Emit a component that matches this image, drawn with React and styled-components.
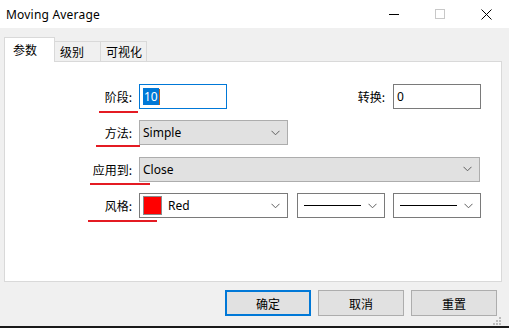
import React from "react";
import styled, { createGlobalStyle } from "styled-components";

const Global = createGlobalStyle`
  html, body { margin: 0; padding: 0; background: #f0f0f0; }
  body { font-family: "Noto Sans", "Noto Sans CJK SC", sans-serif; }
  * { box-sizing: border-box; }
`;

const UI = `"Noto Sans", "Noto Sans CJK SC", sans-serif`;
const CJK = `"Noto Sans CJK SC", "Noto Sans", sans-serif`;

const Window = styled.div`
  width: 509px;
  height: 328px;
  background: #f0f0f0;
  display: flex;
  flex-direction: column;
  overflow: hidden;
`;

const TitleBar = styled.div`
  height: 28px;
  background: #ffffff;
  display: flex;
  align-items: center;
  padding-left: 6px;
  flex-shrink: 0;
`;

const Title = styled.div`
  font-family: ${UI};
  font-size: 12px;
  color: #000;
  flex: 1;
  letter-spacing: 0.2px;
`;

const Controls = styled.div`
  display: flex;
  height: 100%;
`;

const CtrlBtn = styled.div`
  width: 46px;
  height: 28px;
  display: flex;
  align-items: center;
  justify-content: center;
`;

const Body = styled.div`
  flex: 1;
  display: flex;
  flex-direction: column;
  padding: 9px 7px 0 4px;
`;

const TabStrip = styled.div`
  display: flex;
  align-items: flex-end;
  height: 25px;
  margin-bottom: -1px;
  position: relative;
  z-index: 1;
`;

const Tab = styled.div`
  font-family: ${CJK};
  font-size: 12px;
  color: #000;
  width: ${(p) => p.$w}px;
  height: ${(p) => (p.$active ? 25 : 21)}px;
  background: ${(p) => (p.$active ? "#ffffff" : "#f0f0f0")};
  border: 1px solid #d9d9d9;
  border-bottom: ${(p) => (p.$active ? "none" : "1px solid #d9d9d9")};
  border-left: ${(p) => (p.$first || p.$active ? "1px solid #d9d9d9" : "none")};
  display: flex;
  align-items: center;
  padding-left: ${(p) => (p.$active ? 8 : 5)}px;
  padding-bottom: ${(p) => (p.$active ? 1 : 0)}px;
`;

const Panel = styled.div`
  height: 221px;
  width: 498px;
  background: #ffffff;
  border: 1px solid #d9d9d9;
  display: flex;
  flex-direction: column;
  gap: 11.4px;
  padding-top: 22px;
`;

const Row = styled.div`
  display: flex;
  align-items: center;
  height: 25px;
  position: relative;
`;

const Label = styled.div`
  font-family: ${CJK};
  font-size: 12px;
  color: #000;
  width: ${(p) => p.$w || 127}px;
  text-align: right;
  margin-right: ${(p) => p.$mr || 7}px;
  flex-shrink: 0;
`;

const Underline = styled.div`
  position: absolute;
  left: ${(p) => p.$left}px;
  width: ${(p) => p.$width}px;
  top: ${(p) => p.$top}px;
  height: 2px;
  background: #e41b23;
`;

const TextBox = styled.div`
  width: 88px;
  height: 25px;
  border: 1px solid ${(p) => (p.$focus ? "#0078d7" : "#7a7a7a")};
  background: #fff;
  display: flex;
  align-items: center;
  padding-left: 3px;
  font-family: ${UI};
  font-size: 12px;
  color: #000;
  flex-shrink: 0;
`;

const Selected = styled.span`
  background: #0078d7;
  color: #fff;
  padding: 0 1px;
  line-height: 17px;
`;

const Caret = styled.span`
  display: inline-block;
  width: 1px;
  height: 16px;
  background: #c0601a;
`;

const Select = styled.div`
  width: ${(p) => p.$w}px;
  height: 25px;
  margin-left: ${(p) => p.$ml || 0}px;
  border: 1px solid ${(p) => (p.$gray ? "#adadad" : "#7a7a7a")};
  background: ${(p) => (p.$gray ? "#e1e1e1" : "#ffffff")};
  display: flex;
  align-items: center;
  padding-left: 3px;
  padding-right: 7px;
  font-family: ${UI};
  font-size: 12px;
  color: #000;
  flex-shrink: 0;
`;

const SelectValue = styled.div`
  flex: 1;
  display: flex;
  align-items: center;
  gap: 6px;
`;

const Swatch = styled.div`
  width: 19px;
  height: 19px;
  background: #ff0000;
  border: 1px solid #8a8a8a;
`;

const LineSample = styled.div`
  width: 57px;
  height: 1px;
  background: #000;
  margin-left: 3px;
`;

const Spacer = styled.div`
  flex: ${(p) => (p.$fixed ? `0 0 ${p.$fixed}px` : 1)};
`;

const Buttons = styled.div`
  display: flex;
  justify-content: flex-end;
  gap: 7px;
  padding-right: 5px;
  margin-top: 8px;
`;

const Button = styled.div`
  width: 86px;
  height: 26px;
  background: #e1e1e1;
  border: ${(p) => (p.$default ? "2px solid #0078d7" : "1px solid #adadad")};
  display: flex;
  align-items: center;
  justify-content: center;
  font-family: ${CJK};
  font-size: 12px;
  color: #000;
`;

const Grip = styled.div`
  display: flex;
  justify-content: flex-end;
  padding-right: 1px;
  height: 10px;
`;

const BottomStrip = styled.div`
  height: 2px;
  background: #1a1a1a;
  flex-shrink: 0;
`;

const Chevron = () => (
  <svg width="9" height="6" viewBox="0 0 9 6">
    <path d="M0.5 0.8 L4.5 4.8 L8.5 0.8" fill="none" stroke="#606060" strokeWidth="1" />
  </svg>
);

export default function App() {
  return (
    <>
      <Global />
      <Window>
        <TitleBar>
          <Title>Moving Average</Title>
          <Controls>
            <CtrlBtn>
              <svg width="10" height="10" viewBox="0 0 10 10">
                <path d="M0 5.5 H10" stroke="#000" strokeWidth="1" />
              </svg>
            </CtrlBtn>
            <CtrlBtn>
              <svg width="10" height="10" viewBox="0 0 10 10">
                <rect x="0.5" y="0.5" width="9" height="9" fill="none" stroke="#c8c8c8" strokeWidth="1" />
              </svg>
            </CtrlBtn>
            <CtrlBtn>
              <svg width="11" height="11" viewBox="0 0 11 11">
                <path d="M0.5 0.5 L10.5 10.5 M10.5 0.5 L0.5 10.5" stroke="#000" strokeWidth="1" />
              </svg>
            </CtrlBtn>
          </Controls>
        </TitleBar>
        <Body>
          <TabStrip>
            <Tab $w={51} $active $first>参数</Tab>
            <Tab $w={46}>级别</Tab>
            <Tab $w={46}>可视化</Tab>
          </TabStrip>
          <Panel>
            <Row>
              <Label>阶段:</Label>
              <TextBox $focus>
                <Selected>10</Selected>
                <Caret />
              </TextBox>
              <Spacer />
              <Label $w={60} $mr={8}>转换:</Label>
              <TextBox>0</TextBox>
              <Spacer $fixed={20} />
              <Underline $left={94} $width={39} $top={27} />
            </Row>
            <Row>
              <Label>方法:</Label>
              <Select $w={149} $gray>
                <SelectValue>Simple</SelectValue>
                <Chevron />
              </Select>
              <Underline $left={91} $width={44} $top={25} />
            </Row>
            <Row>
              <Label>应用到:</Label>
              <Select $w={341} $gray>
                <SelectValue>Close</SelectValue>
                <Chevron />
              </Select>
              <Underline $left={85} $width={60} $top={26} />
            </Row>
            <Row>
              <Label>风格:</Label>
              <Select $w={149}>
                <SelectValue>
                  <Swatch />
                  <span>Red</span>
                </SelectValue>
                <Chevron />
              </Select>
              <Select $w={88} $ml={9}>
                <SelectValue>
                  <LineSample />
                </SelectValue>
                <Chevron />
              </Select>
              <Select $w={88} $ml={8}>
                <SelectValue>
                  <LineSample />
                </SelectValue>
                <Chevron />
              </Select>
              <Underline $left={83} $width={69} $top={27} />
            </Row>
          </Panel>
          <Buttons>
            <Button $default>确定</Button>
            <Button>取消</Button>
            <Button>重置</Button>
          </Buttons>
          <Spacer />
          <Grip>
            <svg width="9" height="9" viewBox="0 0 9 9">
              {[
                [7, 1],
                [4, 4],
                [7, 4],
                [1, 7],
                [4, 7],
                [7, 7],
              ].map(([x, y], i) => (
                <rect key={i} x={x} y={y} width="2" height="2" fill="#bcbcbc" />
              ))}
            </svg>
          </Grip>
        </Body>
        <BottomStrip />
      </Window>
    </>
  );
}
